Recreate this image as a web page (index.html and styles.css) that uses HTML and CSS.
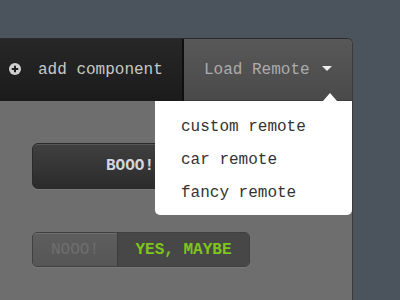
FILE: index.html
```html
<!DOCTYPE html>
<html>
<head>
<meta charset="utf-8">
<link rel="stylesheet" href="styles.css">
</head>
<body>
<div class="panel">
  <div class="toolbar">
    <div class="add">
      <svg class="plus" width="12" height="12" viewBox="0 0 12 12"><circle cx="6" cy="6" r="6" fill="#cfcfcf"/><path d="M6 2.8v6.4M2.8 6h6.4" stroke="#1e1e1e" stroke-width="2"/></svg>
      <span>add component</span>
    </div>
    <div class="load">
      <span>Load Remote</span>
      <span class="caret"></span>
      <ul class="menu">
        <li>custom remote</li>
        <li>car remote</li>
        <li>fancy remote</li>
      </ul>
    </div>
  </div>
  <div class="content">
    <div class="boom">BOOO!</div>
    <div class="toggle">
      <div class="no">NOOO!</div>
      <div class="yes">YES, MAYBE</div>
    </div>
  </div>
</div>
</body>
</html>
```
FILE: styles.css
```css
html, body {
  margin: 0;
  padding: 0;
  height: 100%;
  overflow: hidden;
}
body {
  background: #4b535c;
  font-family: "Liberation Mono", "Courier New", monospace;
  font-size: 16px;
}
.panel {
  margin-top: 38px;
  width: 353px;
  height: 262px;
  border-top: 1px solid #2a2a2a;
  border-right: 1px solid #3a3a3a;
  border-top-right-radius: 6px;
  background: #6e6e6e;
  box-sizing: border-box;
  position: relative;
}
.toolbar {
  display: flex;
  height: 62px;
}
.add {
  width: 184px;
  background: linear-gradient(#272727, #1b1b1b);
  border-right: 2px solid #0f0f0f;
  display: flex;
  align-items: center;
  padding-left: 9px;
  box-sizing: border-box;
  color: #c8c8c8;
  gap: 17px;
}
.plus {
  flex: none;
  margin-top: -2px;
}
.load {
  flex: 1;
  position: relative;
  background: linear-gradient(#585858, #4a4a4a);
  border-top-right-radius: 5px;
  display: flex;
  align-items: center;
  padding-left: 20px;
  color: #acacac;
  border-bottom: 1px solid #3c3c3c;
}
.caret {
  width: 0;
  height: 0;
  border-left: 5px solid transparent;
  border-right: 5px solid transparent;
  border-top: 5px solid #ececec;
  margin-left: 12px;
  margin-top: -2px;
}
.menu {
  position: absolute;
  top: 100%;
  left: -29px;
  right: 0;
  margin: 0;
  margin-top: 1px;
  padding: 10px 0 5px 26px;
  list-style: none;
  background: #ffffff;
  border-radius: 0 0 5px 5px;
  color: #333333;
  line-height: 33px;
  z-index: 2;
}
.menu::before {
  content: "";
  position: absolute;
  top: -8px;
  right: 15px;
  border-left: 7px solid transparent;
  border-right: 7px solid transparent;
  border-bottom: 8px solid #ffffff;
}
.content {
  padding: 42px 0 0 32px;
}
.boom {
  width: 196px;
  height: 46px;
  box-sizing: border-box;
  border-radius: 6px;
  border: 1px solid #2a2a2a;
  background: linear-gradient(#404040, #2b2b2b);
  box-shadow: inset 0 1px 0 rgba(255,255,255,0.12), 0 1px 0 rgba(255,255,255,0.08);
  color: #d2d6dc;
  font-weight: bold;
  display: flex;
  align-items: center;
  justify-content: center;
}
.toggle {
  margin-top: 43px;
  width: 218px;
  height: 35px;
  box-sizing: border-box;
  display: flex;
  border-radius: 5px;
  border: 1px solid #404040;
  overflow: hidden;
  box-shadow: 0 1px 0 rgba(255,255,255,0.08);
}
.no {
  width: 84px;
  background: linear-gradient(#5e5e5e, #565656);
  border-right: 1px solid #3c3c3c;
  box-shadow: inset 0 1px 0 rgba(255,255,255,0.1);
  color: #6f6f6f;
  display: flex;
  align-items: center;
  justify-content: center;
}
.yes {
  flex: 1;
  background: #474747;
  color: #7ec51b;
  font-weight: bold;
  display: flex;
  align-items: center;
  justify-content: center;
}
```
